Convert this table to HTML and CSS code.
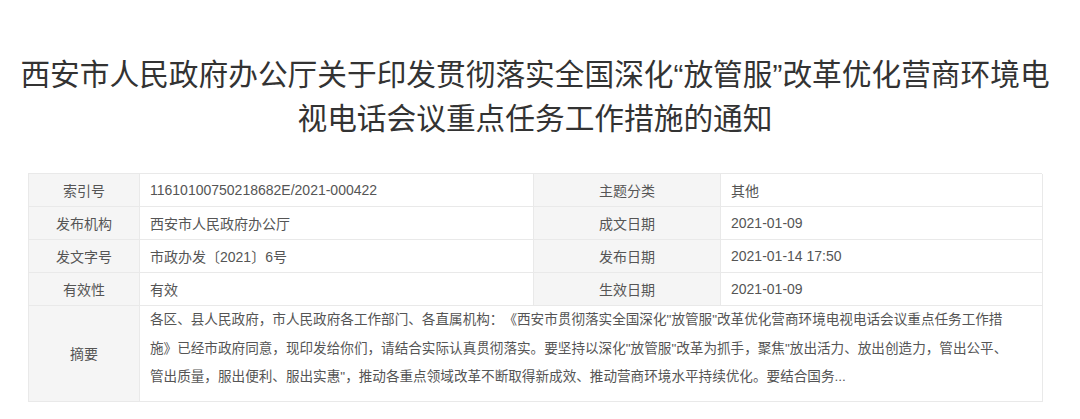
FILE: index.html
```html
<!DOCTYPE html>
<html lang="zh-CN">
<head>
<meta charset="utf-8">
<title>西安市人民政府办公厅关于印发贯彻落实全国深化“放管服”改革优化营商环境电视电话会议重点任务工作措施的通知</title>
<link rel="stylesheet" href="styles.css">
</head>
<body>
<div class="page">
  <h1 class="title">西安市人民政府办公厅关于印发贯彻落实全国深化“放管服”改革优化营商环境电视电话会议重点任务工作措施的通知</h1>
  <div class="info">
    <div class="cell label">索引号</div>
    <div class="cell value">11610100750218682E/2021-000422</div>
    <div class="cell label">主题分类</div>
    <div class="cell value">其他</div>

    <div class="cell label">发布机构</div>
    <div class="cell value">西安市人民政府办公厅</div>
    <div class="cell label">成文日期</div>
    <div class="cell value">2021-01-09</div>

    <div class="cell label">发文字号</div>
    <div class="cell value">市政办发〔2021〕6号</div>
    <div class="cell label">发布日期</div>
    <div class="cell value">2021-01-14 17:50</div>

    <div class="cell label">有效性</div>
    <div class="cell value">有效</div>
    <div class="cell label">生效日期</div>
    <div class="cell value">2021-01-09</div>

    <div class="cell label">摘要</div>
    <div class="cell value summary">各区、县人民政府，市人民政府各工作部门、各直属机构：《西安市贯彻落实全国深化"放管服"改革优化营商环境电视电话会议重点任务工作措施》已经市政府同意，现印发给你们，请结合实际认真贯彻落实。要坚持以深化"放管服"改革为抓手，聚焦"放出活力、放出创造力，管出公平、管出质量，服出便利、服出实惠"，推动各重点领域改革不断取得新成效、推动营商环境水平持续优化。要结合国务...</div>
  </div>
</div>
</body>
</html>
```

FILE: styles.css
```css
html, body {
  margin: 0;
  padding: 0;
  background: #ffffff;
}

body {
  font-family: "Liberation Sans", "Noto Sans CJK SC", sans-serif;
  color: #555555;
}

.page {
  width: 1014px;
  margin-left: 28px;
  padding-top: 53px;
}

.title {
  margin: 0 -10px 32px;
  font-size: 29.7px;
  font-weight: normal;
  line-height: 44px;
  color: #333333;
  text-align: center;
}

.info {
  display: grid;
  grid-template-columns: 111px 394px 187px 322px;
  grid-auto-rows: minmax(33px, auto);
  border-top: 1px solid #e9e9e9;
  border-left: 1px solid #e9e9e9;
  font-size: 14px;
}

.cell {
  display: flex;
  align-items: center;
  border-right: 1px solid #e9e9e9;
  border-bottom: 1px solid #e9e9e9;
}

.label {
  justify-content: center;
  background: #f5f5f5;
  color: #555555;
}

.value {
  padding: 0 10px;
  background: #ffffff;
  color: #555555;
}

.summary {
  grid-column: 2 / span 3;
  display: block;
  padding: 0 30px 9px 10px;
  font-size: 13.6px;
  line-height: 28.5px;
  text-spacing-trim: space-all;
}
```
